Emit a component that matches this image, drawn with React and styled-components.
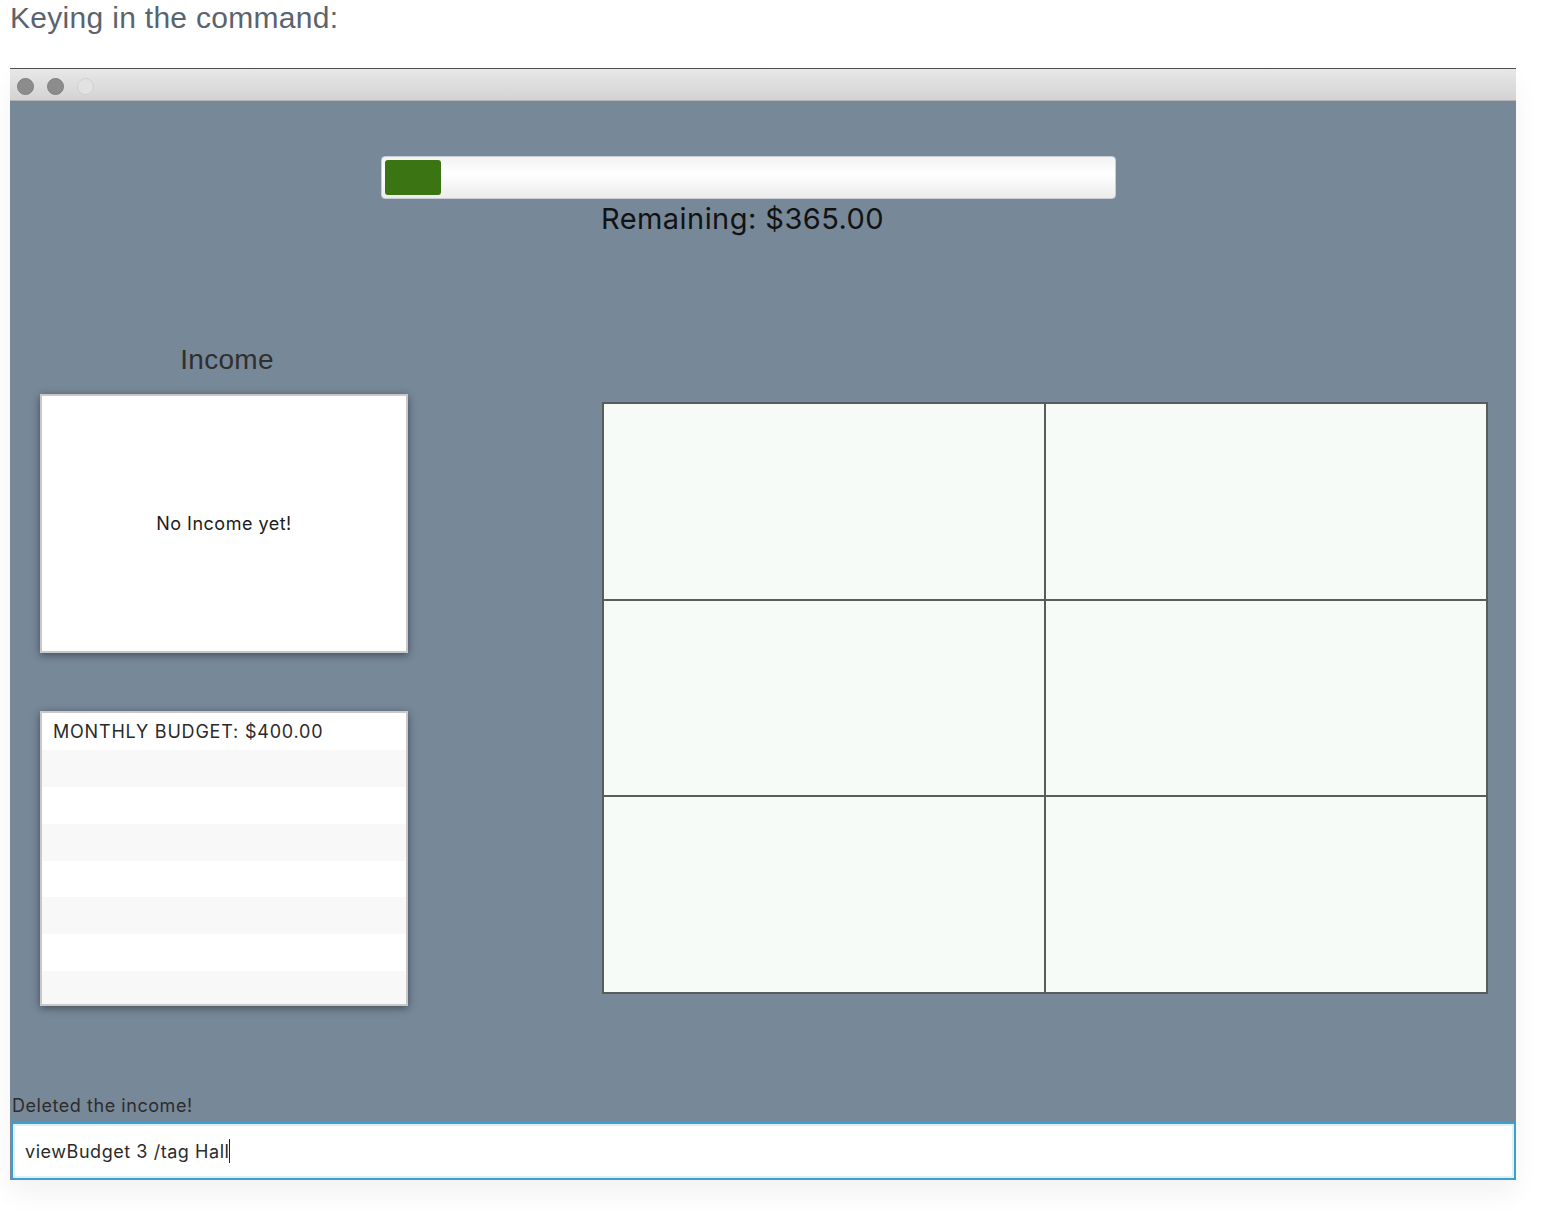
import styled, {createGlobalStyle} from "styled-components";

const Global = createGlobalStyle`
  body {
    margin: 0;
    background: #fff;
    font-family: "Liberation Sans", Arial, sans-serif;
  }
`;

const Page = styled.div`
  width: 1542px;
  height: 1210px;
  overflow: hidden;
`;

const Heading = styled.h2`
  margin: 0;
  padding-left: 10px;
  height: 68px;
  line-height: 36px;
  font-size: 30px;
  letter-spacing: 0.3px;
  font-weight: 400;
  color: #5b636d;
`;

const Window = styled.div`
  margin-left: 10px;
  width: 1506px;
  box-shadow: 0 14px 24px rgba(0, 0, 0, 0.05);
`;

const TitleBar = styled.div`
  height: 33px;
  box-sizing: border-box;
  border-top: 1px solid #505050;
  border-bottom: 1px solid #b4b4b4;
  background: linear-gradient(#e8e8e8, #d3d3d3);
  display: flex;
  align-items: center;
  gap: 13px;
  padding: 4px 0 0 7px;
`;

const Light = styled.span`
  width: 17px;
  height: 17px;
  border-radius: 50%;
  box-sizing: border-box;
  background: ${p => (p.off ? "#e2e2e2" : "#8c8c8c")};
  border: 1px solid ${p => (p.off ? "#cfcfcf" : "#7f7f7f")};
`;

const Body = styled.div`
  height: 1079px;
  background: #778899;
  display: flex;
  flex-direction: column;
  font-family: Inter, "Liberation Sans", sans-serif;
`;

const Top = styled.div`
  margin: 55px 0 0 371px;
  width: 735px;
  display: flex;
  flex-direction: column;
`;

const Bar = styled.div`
  height: 43px;
  box-sizing: border-box;
  border: 1px solid #c9ced4;
  border-radius: 4px;
  background: linear-gradient(#f2f2f2, #ffffff 40%, #ececec);
  padding: 3px;
`;

const Fill = styled.div`
  height: 35px;
  border-radius: 3px;
  background: #3b7412;
`;

const Remaining = styled.div`
  margin-top: 2px;
  padding-right: 12px;
  text-align: center;
  font-size: 29px;
  letter-spacing: 0.45px;
  line-height: 36px;
  color: #121212;
`;

const Main = styled.div`
  margin-top: 105px;
  display: flex;
  align-items: flex-start;
`;

const LeftCol = styled.div`
  margin-left: 30px;
  width: 368px;
  display: flex;
  flex-direction: column;
`;

const Label = styled.div`
  text-align: center;
  padding-left: 6px;
  font-size: 28px;
  letter-spacing: 0.3px;
  line-height: 36px;
  color: #2f2f2f;
  font-family: "Liberation Sans", Arial, sans-serif;
  margin-bottom: 16px;
`;

const Card = styled.div`
  box-sizing: border-box;
  border: 2px solid #c8c8c8;
  background: #fff;
  box-shadow: 0 2px 8px rgba(0, 0, 0, 0.45);
`;

const IncomeCard = styled(Card)`
  height: 259px;
  display: flex;
  align-items: center;
  justify-content: center;
  font-size: 18px;
  letter-spacing: 0.5px;
  color: #1c1c1c;
`;

const BudgetList = styled(Card)`
  margin-top: 58px;
  height: 295px;
  overflow: hidden;
`;

const Row = styled.div`
  height: 36.9px;
  box-sizing: border-box;
  padding-left: 11px;
  display: flex;
  align-items: center;
  font-size: 18px;
  letter-spacing: 0.8px;
  color: #2b2b2b;
  background: ${p => (p.odd ? "#f8f8f8" : "#fff")};
`;

const Grid = styled.div`
  margin: 60px 0 0 194px;
  width: 886px;
  height: 592px;
  box-sizing: border-box;
  display: grid;
  grid-template-columns: 1fr 1fr;
  grid-template-rows: 1fr 1fr 1fr;
  gap: 2px;
  padding: 2px;
  background: #585c5a;
`;

const Cell = styled.div`
  background: #f6fbf7;
`;

const Bottom = styled.div`
  margin-top: auto;
  display: flex;
  flex-direction: column;
`;

const Status = styled.div`
  padding-left: 2px;
  font-size: 18px;
  letter-spacing: 0.55px;
  line-height: 22px;
  color: #2c2c2c;
  margin-bottom: 5px;
`;

const Command = styled.div`
  height: 58px;
  box-sizing: border-box;
  margin-left: 1px;
  border: 2px solid #3f9fcf;
  border-radius: 3px;
  background: #fff;
  box-shadow: inset 0 0 0 2px #dff0f8;
  display: flex;
  align-items: center;
  padding-left: 12px;
  font-size: 18px;
  letter-spacing: 0.55px;
  color: #2b2b2b;
`;

const Caret = styled.span`
  display: inline-block;
  width: 1px;
  height: 24px;
  background: #222;
  vertical-align: middle;
`;

export default function App() {
  const rows = Array.from({length: 7});
  return (
    <Page>
      <Global />
      <Heading>Keying in the command:</Heading>
      <Window>
        <TitleBar>
          <Light />
          <Light />
          <Light off />
        </TitleBar>
        <Body>
          <Top>
            <Bar>
              <Fill style={{width: 56}} />
            </Bar>
            <Remaining>Remaining: $365.00</Remaining>
          </Top>
          <Main>
            <LeftCol>
              <Label>Income</Label>
              <IncomeCard>No Income yet!</IncomeCard>
              <BudgetList>
                <Row>MONTHLY BUDGET: $400.00</Row>
                {rows.map((_, i) => (
                  <Row key={i} odd={i % 2 === 0} />
                ))}
              </BudgetList>
            </LeftCol>
            <Grid>
              {Array.from({length: 6}).map((_, i) => (
                <Cell key={i} />
              ))}
            </Grid>
          </Main>
          <Bottom>
            <Status>Deleted the income!</Status>
            <Command>
              viewBudget 3 /tag Hall<Caret />
            </Command>
          </Bottom>
        </Body>
      </Window>
    </Page>
  );
}
